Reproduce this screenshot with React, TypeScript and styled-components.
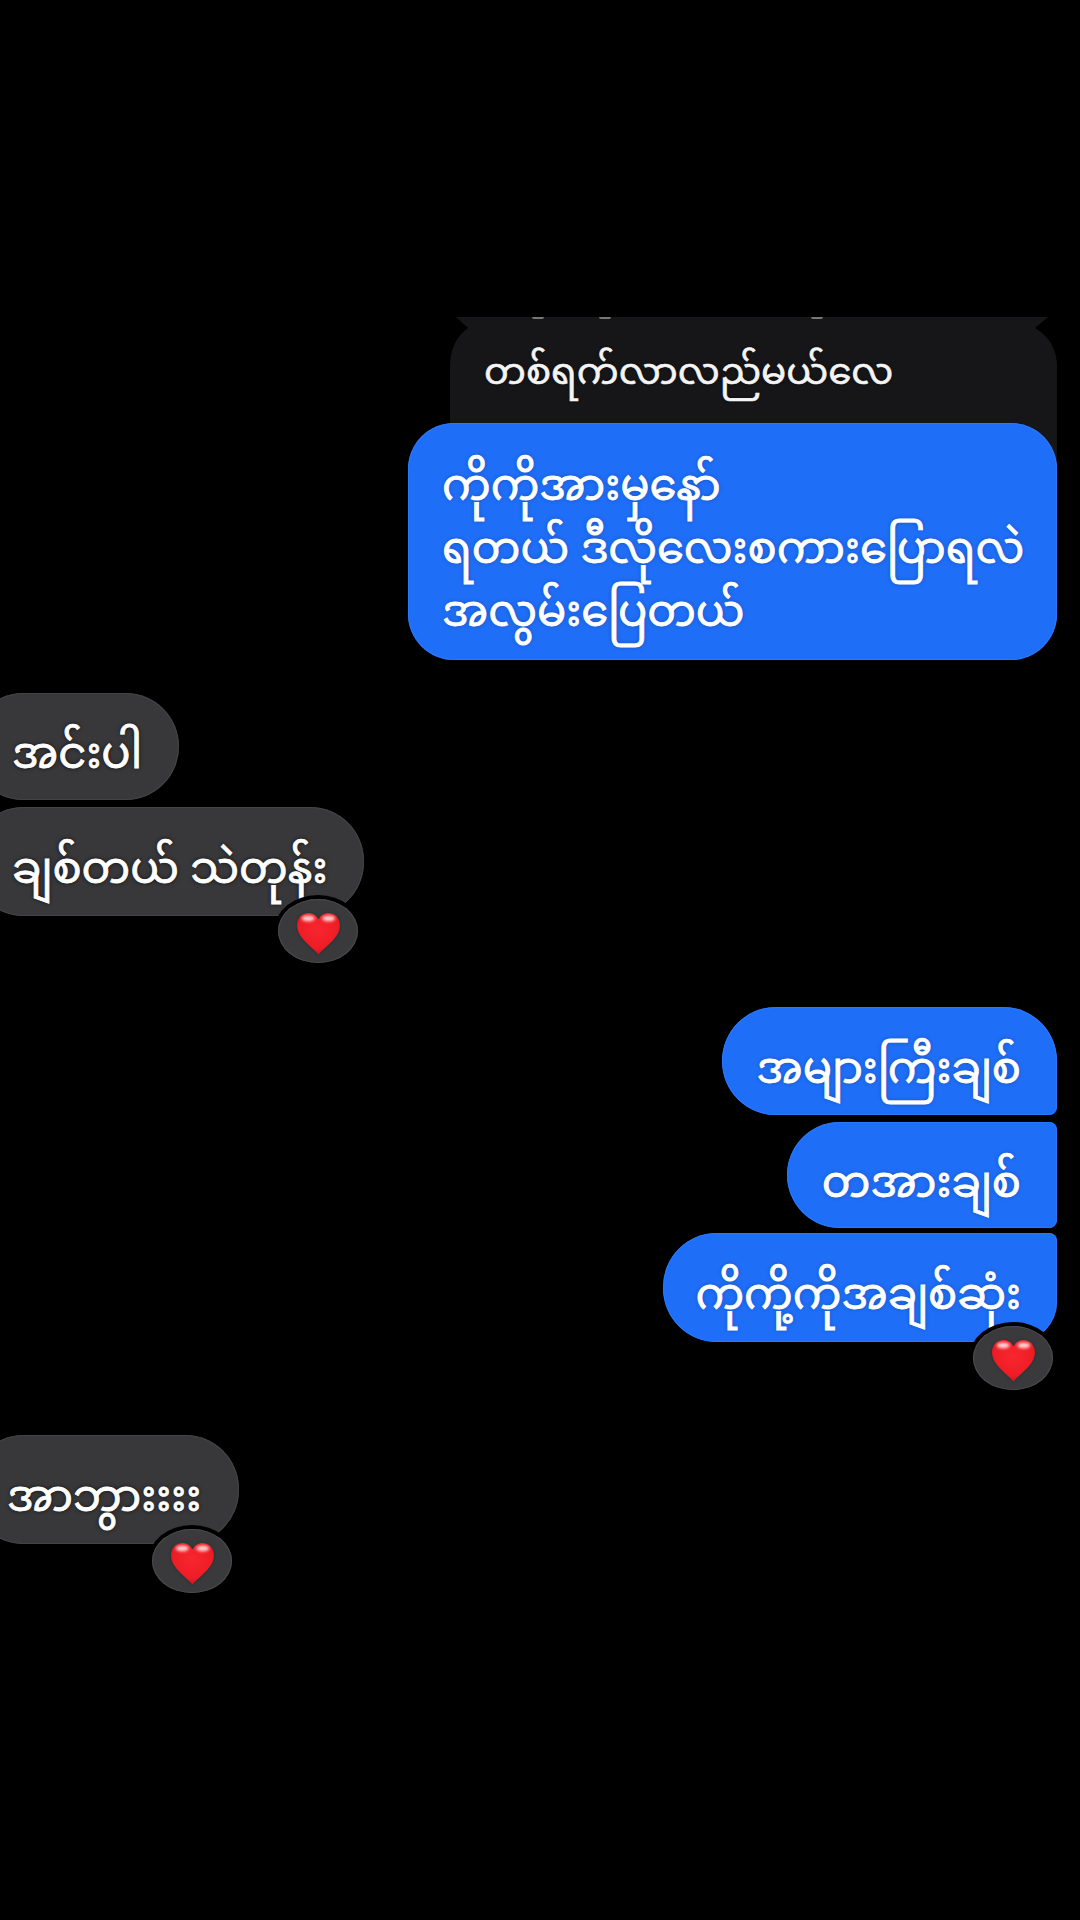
import React from "react";
import styled, { createGlobalStyle } from "styled-components";

const GlobalStyle = createGlobalStyle`
  html, body {
    margin: 0;
    padding: 0;
    background: #000;
  }
  body {
    font-family: "Noto Sans Myanmar", "Padauk", "Myanmar Text", "Noto Sans", "DejaVu Sans", sans-serif;
  }
`;

const Page = styled.div`
  width: 1080px;
  height: 1920px;
  overflow: hidden;
  background: #000;
  padding-top: 317px;
  box-sizing: border-box;
  display: flex;
  flex-direction: column;
`;

const Row = styled.div<{ $mine?: boolean; $top?: number }>`
  display: flex;
  justify-content: ${({ $mine }) => ($mine ? "flex-end" : "flex-start")};
  margin-top: ${({ $top }) => $top ?? 0}px;
  padding-right: ${({ $mine }) => ($mine ? 23 : 0)}px;
`;

const QuotedBubble = styled.div`
  position: relative;
  width: 607px;
  height: 150px;
  box-sizing: border-box;
  padding: 27px 0 0 34px;
  background: #161618;
  clip-path: path("M6 0 L598 0 L585 11 Q607 24 607 50 L607 150 L0 150 L0 50 Q0 24 18 11 Z");
  color: #f4f4f4;
  font-size: 37.300px;
  line-height: 64px;
  white-space: nowrap;
  -webkit-text-stroke: 0.6px #f4f4f4;
  text-shadow: 0 0 3px rgba(0, 0, 0, 0.8);
`;

const ClippedTail = styled.span<{ $left: number }>`
  position: absolute;
  top: 0;
  left: ${({ $left }) => $left}px;
  width: 12px;
  height: 2px;
  border-radius: 0 0 6px 6px;
  background: #777;
`;

const Bubble = styled.div<{ $mine?: boolean; $width: number; $height: number; $radius?: string; $inset?: number }>`
  position: relative;
  box-sizing: border-box;
  flex: none;
  width: ${({ $width }) => $width}px;
  height: ${({ $height }) => $height}px;
  margin-left: ${({ $mine }) => ($mine ? 0 : -30)}px;
  padding: 24px ${({ $mine }) => ($mine ? 36 : 0)}px 0 ${({ $mine, $inset }) => ($mine ? 34 : $inset ?? 42)}px;
  display: flex;
  align-items: center;
  justify-content: ${({ $mine }) => ($mine ? "flex-end" : "flex-start")};
  background: ${({ $mine }) => ($mine ? "#1f6ef8" : "#38383a")};
  box-shadow: inset 0 0 0 1px ${({ $mine }) => ($mine ? "#2b78fb" : "#444446")};
  border-radius: ${({ $radius }) => $radius ?? "54px"};
  color: #fff;
  font-size: 43.300px;
  line-height: 63px;
  white-space: nowrap;
  -webkit-text-stroke: 0.8px #fff;
  text-shadow: 0 0 4px rgba(0, 0, 0, ${({ $mine }) => ($mine ? 0.3 : 0.85)});
`;

const MultiLine = styled.div`
  width: 100%;
  text-align: left;
`;

const Reaction = styled.div<{ $right: number; $bottom: number }>`
  position: absolute;
  right: ${({ $right }) => $right}px;
  bottom: ${({ $bottom }) => $bottom}px;
  box-sizing: border-box;
  width: 80px;
  height: 64px;
  padding-top: 4px;
  border-radius: 50%;
  background: #3a3a3c;
  box-shadow: 0 0 0 4px #000, inset 0 0 0 1px #4a4a4c;
  display: flex;
  align-items: center;
  justify-content: center;
`;

const HeartSvg = styled.svg`
  filter: drop-shadow(0 0 1.500px #0f3234);
`;

const HeartIcon = () => (
  <HeartSvg width="45" height="43" viewBox="0 0 46 44">
    <defs>
      <radialGradient id="heartFill" cx="50%" cy="40%" r="70%">
        <stop offset="0%" stopColor="#f8262e" />
        <stop offset="65%" stopColor="#ee1c25" />
        <stop offset="100%" stopColor="#c50d15" />
      </radialGradient>
      <filter id="heartGlow" x="-50%" y="-50%" width="200%" height="200%">
        <feGaussianBlur stdDeviation="1.800" />
      </filter>
    </defs>
    <path
      d="M23 43.500C18 36.500 1 27 1 13.500 1 6 6.500 1 12.800 1 17.300 1 21 3.500 23 7.500 25 3.500 28.700 1 33.200 1 39.500 1 45 6 45 13.500 45 27 28 36.500 23 43.500Z"
      fill="url(#heartFill)"
    />
    <ellipse cx="12.500" cy="6.500" rx="6.500" ry="3" fill="#ffd0d0" filter="url(#heartGlow)" />
    <ellipse cx="33.500" cy="6.500" rx="6.500" ry="3" fill="#ffd0d0" filter="url(#heartGlow)" />
  </HeartSvg>
);

export default function App() {
  return (
    <>
      <GlobalStyle />
      <Page>
        <Row $mine>
          <QuotedBubble>
            <ClippedTail $left={82} />
            <ClippedTail $left={149} />
            <ClippedTail $left={361} />
            တစ်ရက်လာလည်မယ်လေ
          </QuotedBubble>
        </Row>
        <Row $mine $top={-44}>
          <Bubble $mine $width={649} $height={237} $radius="46px">
            <MultiLine>
              ကိုကိုအားမှနော်
              <br />
              ရတယ် ဒီလိုလေးစကားပြောရလဲ
              <br />
              အလွမ်းပြေတယ်
            </MultiLine>
          </Bubble>
        </Row>
        <Row $top={33}>
          <Bubble $width={209} $height={107}>အင်းပါ</Bubble>
        </Row>
        <Row $top={7}>
          <Bubble $width={394} $height={109}>
            ချစ်တယ် သဲတုန်း
            <Reaction $right={6} $bottom={-47}>
              <HeartIcon />
            </Reaction>
          </Bubble>
        </Row>
        <Row $mine $top={91}>
          <Bubble $mine $width={335} $height={108} $radius="54px 54px 8px 54px">
            အများကြီးချစ်
          </Bubble>
        </Row>
        <Row $mine $top={7}>
          <Bubble $mine $width={270} $height={106} $radius="53px 8px 8px 53px">
            တအားချစ်
          </Bubble>
        </Row>
        <Row $mine $top={5}>
          <Bubble $mine $width={394} $height={109} $radius="54px 8px 40px 54px">
            ကိုကို့ကိုအချစ်ဆုံး
            <Reaction $right={4} $bottom={-48}>
              <HeartIcon />
            </Reaction>
          </Bubble>
        </Row>
        <Row $top={93}>
          <Bubble $width={269} $height={109} $inset={37}>
            အာဘွားးးး
            <Reaction $right={7} $bottom={-49}>
              <HeartIcon />
            </Reaction>
          </Bubble>
        </Row>
      </Page>
    </>
  );
}
